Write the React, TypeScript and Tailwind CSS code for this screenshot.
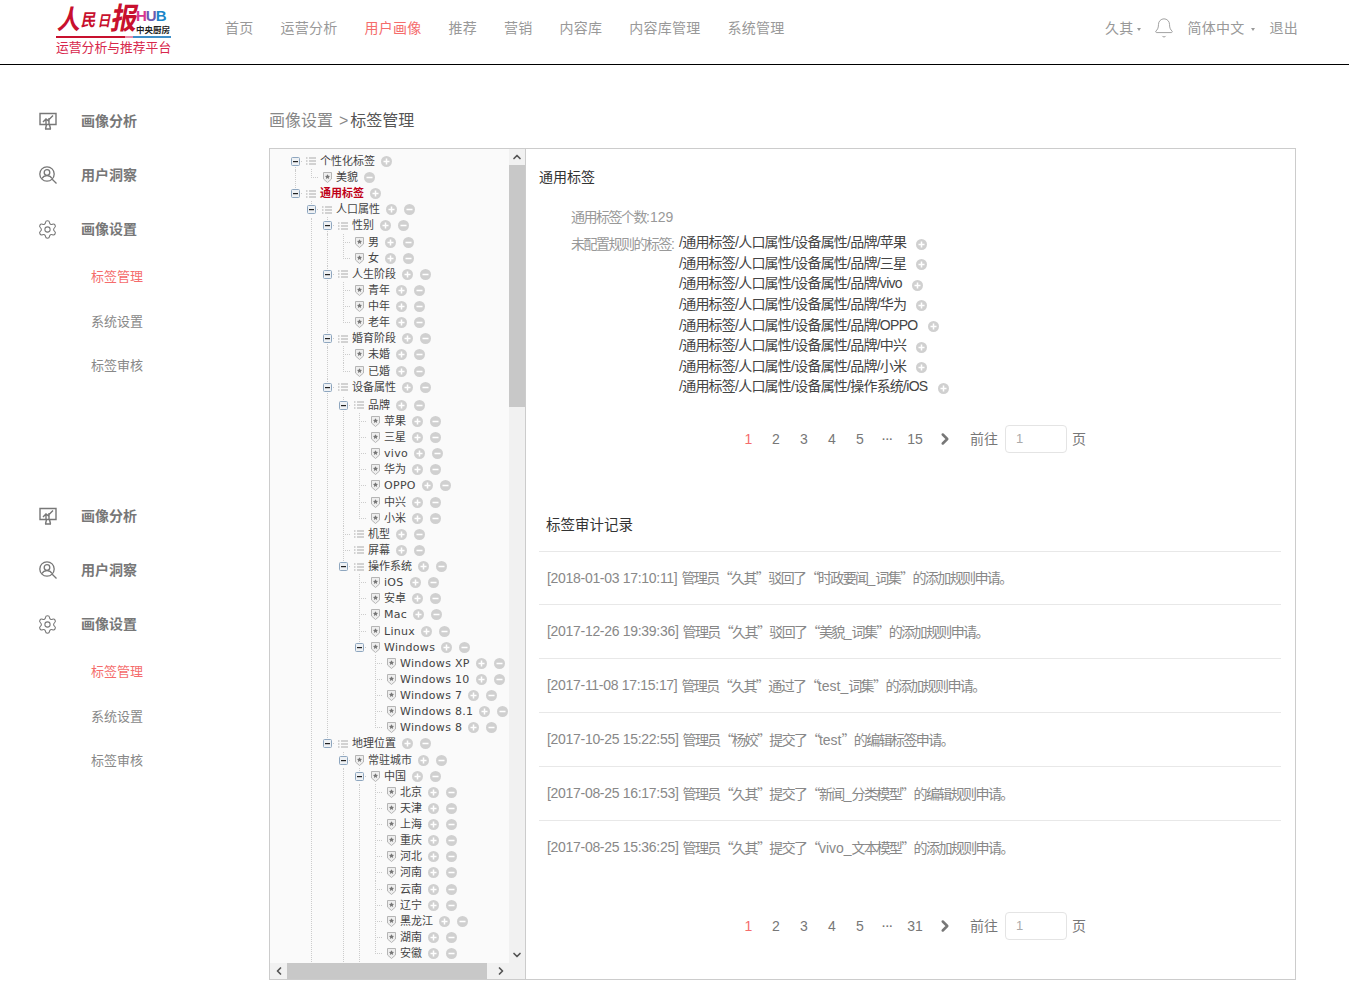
import { Bell, ChevronDown, ChevronLeft, ChevronRight, ChevronUp, Settings } from "lucide-react";

type TreeNode = {
  name: string;
  icon?: "list" | "shield";
  red?: boolean;
  noPlus?: boolean;
  noMinus?: boolean;
  line?: boolean;
  gapAfter?: boolean;
  children?: TreeNode[];
};

const leaf = (names: string[]): TreeNode[] => names.map((name) => ({ name }));

const tree: TreeNode[] = [
  {
    name: "个性化标签",
    icon: "list",
    noMinus: true,
    line: true,
    children: [{ name: "美貌", noPlus: true }],
  },
  {
    name: "通用标签",
    icon: "list",
    red: true,
    noMinus: true,
    children: [
      {
        name: "人口属性",
        icon: "list",
        line: true,
        children: [
          { name: "性别", icon: "list", line: true, children: leaf(["男", "女"]) },
          { name: "人生阶段", icon: "list", line: true, children: leaf(["青年", "中年", "老年"]) },
          { name: "婚育阶段", icon: "list", line: true, children: leaf(["未婚", "已婚"]) },
          {
            name: "设备属性",
            icon: "list",
            line: true,
            gapAfter: true,
            children: [
              {
                name: "品牌",
                icon: "list",
                line: true,
                children: leaf(["苹果", "三星", "vivo", "华为", "OPPO", "中兴", "小米"]),
              },
              { name: "机型", icon: "list" },
              { name: "屏幕", icon: "list" },
              {
                name: "操作系统",
                icon: "list",
                children: [
                  ...leaf(["iOS", "安卓", "Mac", "Linux"]),
                  {
                    name: "Windows",
                    icon: "shield",
                    children: leaf(["Windows XP", "Windows 10", "Windows 7", "Windows 8.1", "Windows 8"]),
                  },
                ],
              },
            ],
          },
          {
            name: "地理位置",
            icon: "list",
            children: [
              {
                name: "常驻城市",
                icon: "shield",
                line: true,
                children: [
                  {
                    name: "中国",
                    icon: "shield",
                    line: true,
                    children: leaf(["北京", "天津", "上海", "重庆", "河北", "河南", "云南", "辽宁", "黑龙江", "湖南", "安徽"]),
                  },
                ],
              },
            ],
          },
        ],
      },
    ],
  },
];

const navItems = ["首页", "运营分析", "用户画像", "推荐", "营销", "内容库", "内容库管理", "系统管理"];

const paths = [
  "/通用标签/人口属性/设备属性/品牌/苹果",
  "/通用标签/人口属性/设备属性/品牌/三星",
  "/通用标签/人口属性/设备属性/品牌/vivo",
  "/通用标签/人口属性/设备属性/品牌/华为",
  "/通用标签/人口属性/设备属性/品牌/OPPO",
  "/通用标签/人口属性/设备属性/品牌/中兴",
  "/通用标签/人口属性/设备属性/品牌/小米",
  "/通用标签/人口属性/设备属性/操作系统/iOS",
];

const records = [
  ["[2018-01-03 17:10:11]", "管理员“久其”驳回了“时政要闻_词集”的添加规则申请。"],
  ["[2017-12-26 19:39:36]", "管理员“久其”驳回了“美貌_词集”的添加规则申请。"],
  ["[2017-11-08 17:15:17]", "管理员“久其”通过了“test_词集”的添加规则申请。"],
  ["[2017-10-25 15:22:55]", "管理员“杨姣”提交了“test”的编辑标签申请。"],
  ["[2017-08-25 16:17:53]", "管理员“久其”提交了“新闻_分类模型”的编辑规则申请。"],
  ["[2017-08-25 15:36:25]", "管理员“久其”提交了“vivo_文本模型”的添加规则申请。"],
];

// latin runs keep normal spacing, the cjk runs are squeezed like in the original page
function Mixed({ text, cjk, latin }: { text: string; cjk: string; latin?: string }) {
  const runs = text.split(/([\x00-\x7f]+)/).filter(Boolean);
  return (
    <>
      {runs.map((r, i) =>
        /^[\x00-\x7f]/.test(r) ? (
          <span key={i} className={latin}>
            {r}
          </span>
        ) : (
          <span key={i} className={cjk}>
            {r}
          </span>
        ),
      )}
    </>
  );
}

function CircleBtn({ minus }: { minus?: boolean }) {
  return (
    <svg width="11" height="11" viewBox="0 0 11 11" className="shrink-0">
      <circle cx="5.5" cy="5.5" r="5.5" fill="#d0d0d0" />
      <rect x="2.5" y="4.75" width="6" height="1.5" fill="#fff" />
      {!minus && <rect x="4.75" y="2.5" width="1.5" height="6" fill="#fff" />}
    </svg>
  );
}

function ListIcon() {
  return (
    <svg width="10" height="8" viewBox="0 0 10 8" className="shrink-0">
      <path d="M0 1h1.5M3 1h7M0 4h1.5M3 4h7M0 7h1.5M3 7h7" stroke="#aaa" strokeWidth="1" />
    </svg>
  );
}

function ShieldIcon() {
  return (
    <svg width="9" height="11" viewBox="0 0 9 11" className="shrink-0">
      <path d="M.5.5h8v6.5L4.5 10.5.5 7z" fill="#eee" stroke="#b5b5b5" />
      <path d="M4.5 2.2l.8 1.6 1.7.2-1.2 1.2.3 1.7-1.6-.8-1.6.8.3-1.7L2 4l1.7-.2z" fill="#777" />
    </svg>
  );
}

// switch cell of a row: the dotted connector and, for a parent, the small minus box
function Switch({ open, last, first }: { open: boolean; last: boolean; first: boolean }) {
  return (
    <svg width="16" height="17" viewBox="0 0 16 17" className="shrink-0">
      {!first && <path d="M8.5 0v8" stroke="#ccc" strokeDasharray="1 1" />}
      {!last && <path d="M8.5 8v9" stroke="#ccc" strokeDasharray="1 1" />}
      <path d="M8 8.5h8" stroke="#ccc" strokeDasharray="1 1" />
      {open && (
        <g>
          <rect x="4.5" y="4.5" width="8" height="8" rx="1" fill="#eef1f4" stroke="#8ea6bf" />
          <rect x="6" y="8" width="5" height="1.2" fill="#222" />
        </g>
      )}
    </svg>
  );
}

function TreeRow({ node, first, last }: { node: TreeNode; first: boolean; last: boolean }) {
  const hasKids = !!node.children;
  return (
    <div>
      <div className={`flex h-[16.13px] items-center ${node.gapAfter ? "mb-[2px]" : ""}`}>
        <Switch open={hasKids} first={first} last={last} />
        <span className="flex w-[16px] shrink-0 justify-center">
          {node.icon === "list" ? <ListIcon /> : <ShieldIcon />}
        </span>
        <span
          className={`ml-px whitespace-nowrap text-[11px] leading-none ${
            node.red ? "font-bold text-[#c00018]" : "text-[#444]"
          }`}
        >
          <Mixed text={node.name} cjk="" latin="tracking-[0.3px]" />
        </span>
        {!node.noPlus && (
          <span className="ml-[6px]">
            <CircleBtn />
          </span>
        )}
        {!node.noMinus && (
          <span className={node.noPlus ? "ml-[6px]" : "ml-[7px]"}>
            <CircleBtn minus />
          </span>
        )}
      </div>
      {hasKids && (
        <div
          className={`ml-[8px] border-l border-dotted pl-[7px] ${
            node.line || !last ? "border-[#ccc]" : "border-transparent"
          }`}
        >
          {node.children!.map((c, i) => (
            <TreeRow key={c.name} node={c} first={false} last={i === node.children!.length - 1} />
          ))}
        </div>
      )}
    </div>
  );
}

function Pager({ total }: { total: string }) {
  return (
    <div className="flex h-7 items-center justify-center text-[14px] text-[#777]">
      <span className="w-[27px] text-center text-[#f56c6c]">1</span>
      {["2", "3", "4", "5"].map((p) => (
        <span key={p} className="w-7 text-center">
          {p}
        </span>
      ))}
      <span className="w-[27px] text-center text-[11px] font-bold">···</span>
      <span className="w-7 text-center">{total}</span>
      <span className="flex w-[32px] justify-center">
        <ChevronRight size={18} strokeWidth={3.4} color="#777" />
      </span>
      <span className="ml-[9px]">前往</span>
      <span className="ml-[7px] flex h-7 w-[62px] items-center rounded border border-[#e4e4e4] pl-[10px] text-[13px] text-[#aaa]">
        1
      </span>
      <span className="ml-[5px]">页</span>
    </div>
  );
}

function ChartIcon() {
  return (
    <svg width="18" height="18" viewBox="0 0 18 18" fill="none" stroke="#777" strokeWidth="1.4">
      <path d="M1 1.5h16v11H1z" />
      <path d="M6 17h6M7.5 12.5l-1 4.5M10.5 12.5l1 4.5" />
      <path d="M4 10l3-3 2 1.5 5-5M7 7v5M10 6v6" />
    </svg>
  );
}

function UserSearchIcon() {
  return (
    <svg width="18" height="18" viewBox="0 0 18 18" fill="none" stroke="#777" strokeWidth="1.3">
      <circle cx="8" cy="8" r="7.2" />
      <circle cx="8" cy="6.5" r="2.8" />
      <path d="M3 12.6c1-2.2 3-3 5-3s4 .8 5 3M13.2 13.2l4.3 4.3" />
    </svg>
  );
}

function SideGroup() {
  return (
    <div className="h-[395px]">
      <div className="flex h-[54px] items-center">
        <span className="flex w-[43px] pl-[1px]">
          <ChartIcon />
        </span>
        <span className="text-[14px] font-bold text-[#777]">画像分析</span>
      </div>
      <div className="flex h-[54px] items-center">
        <span className="flex w-[43px] pl-[1px]">
          <UserSearchIcon />
        </span>
        <span className="text-[14px] font-bold text-[#777]">用户洞察</span>
      </div>
      <div className="flex h-[54px] items-center">
        <span className="-ml-px flex w-[44px]">
          <Settings size={21} strokeWidth={1.2} color="#777" />
        </span>
        <span className="text-[14px] font-bold text-[#777]">画像设置</span>
      </div>
      <div className="-mt-px pl-[53px] text-[13px] leading-[44.6px] text-[#888]">
        <div className="text-[#f56c6c]">标签管理</div>
        <div>系统设置</div>
        <div>标签审核</div>
      </div>
    </div>
  );
}

export default function App() {
  return (
    <div className="h-[1000px] w-[1349px] overflow-hidden bg-white font-['Liberation_Sans','Noto_Sans_CJK_SC',sans-serif]">
      <header className="flex h-[65px] items-start border-b border-black pl-[56px] pr-[51px]">
        <div className="w-[115px] pt-[3px]">
          <div className="flex h-[31px] items-end justify-between">
            <div className="flex origin-bottom -skew-x-12 scale-y-[1.15] items-end whitespace-nowrap font-bold leading-none text-[#c8102e]">
              <span className="text-[23px]">人</span>
              <span className="mb-[5px] text-[15px]">民</span>
              <span className="mb-[5px] ml-[2px] text-[13px]">日</span>
              <span className="text-[26px]">报</span>
            </div>
            <div className="w-[35px] shrink-0 leading-none">
              <div className="text-[15px] font-bold tracking-[-1px]">
                <span className="text-[#d6358f]">H</span>
                <span className="text-[#6a5ab0]">U</span>
                <span className="text-[#1b86c8]">B</span>
              </div>
              <div className="mt-[3px] whitespace-nowrap text-[8.5px] font-bold text-[#222]">中央厨房</div>
            </div>
          </div>
          <div className="mt-[2px] flex h-[2px]">
            <div className="w-[69px] bg-[#c8102e]" />
            <div className="w-[8px] bg-[#e88aa8]" />
            <div className="flex-1 bg-[#3f8fc9]" />
          </div>
          <div className="mt-[2px] whitespace-nowrap text-[12.8px] leading-[16px] text-[#d8274c]">运营分析与推荐平台</div>
        </div>
        <nav className="ml-[54px] flex h-[56px] items-center gap-[27px] text-[14px] tracking-[0.25px] text-[#999]">
          {navItems.map((n) => (
            <span key={n} className={n === "用户画像" ? "text-[#f56c6c]" : ""}>
              {n}
            </span>
          ))}
        </nav>
        <div className="ml-auto flex h-[56px] items-center text-[14px] tracking-[0.25px] text-[#999]">
          <span>久其</span>
          <span className="ml-[3px] mt-[2px] h-0 w-0 border-x-[2.5px] border-t-[3px] border-x-transparent border-t-[#999]" />
          <span className="ml-[12px]">
            <Bell size={22} strokeWidth={1} color="#999" />
          </span>
          <span className="ml-[13px]">简体中文</span>
          <span className="ml-[6px] mt-[2px] h-0 w-0 border-x-[2.5px] border-t-[3px] border-x-transparent border-t-[#999]" />
          <span className="ml-[15px]">退出</span>
        </div>
      </header>

      <div className="flex">
        <aside className="w-[269px] shrink-0 pl-[38px] pt-[29px]">
          <SideGroup />
          <SideGroup />
        </aside>

        <main className="w-[1027px]">
          <div className="flex h-[83px] items-end pb-[16px] text-[16px] leading-[22px] text-[#888]">
            画像设置<span className="ml-[6px] mr-[2px]">&gt;</span>
            <span className="text-[#555]">标签管理</span>
          </div>

          <div className="flex h-[832px] border border-[#ccc]">
            <div className="flex w-[256px] shrink-0 flex-col border-r border-[#ccc]">
              <div className="flex min-h-0 flex-1">
                <div className="min-w-0 flex-1 overflow-hidden bg-[#fafafa] pl-[17px] pt-[4.4px] font-['DejaVu_Sans','Noto_Sans_CJK_SC',sans-serif]">
                  {tree.map((n, i) => (
                    <TreeRow key={n.name} node={n} first={i === 0} last={i === tree.length - 1} />
                  ))}
                </div>
                <div className="flex w-[16px] shrink-0 flex-col bg-[#f1f1f1]">
                  <div className="flex h-[16px] items-center justify-center">
                    <ChevronUp size={12} strokeWidth={3.4} color="#555" />
                  </div>
                  <div className="h-[242px] bg-[#c8c8c8]" />
                  <div className="mt-auto flex h-[16px] items-center justify-center">
                    <ChevronDown size={12} strokeWidth={3.4} color="#555" />
                  </div>
                </div>
              </div>
              <div className="flex h-[16px] shrink-0 items-center bg-[#f1f1f1]">
                <div className="flex w-[17px] justify-center">
                  <ChevronLeft size={12} strokeWidth={3.4} color="#555" />
                </div>
                <div className="h-full w-[200px] bg-[#c8c8c8]" />
                <div className="ml-[5px] flex w-[17px] justify-center">
                  <ChevronRight size={12} strokeWidth={3.4} color="#555" />
                </div>
              </div>
            </div>

            <div className="min-w-0 flex-1">
              <div className="pl-[13px] pt-[18px] text-[14px] leading-[20px] text-[#333]">通用标签</div>

              <div className="ml-[45px] mt-[20px] text-[14px] leading-[20px] text-[#999]">
                <Mixed text="通用标签个数:129" cjk="tracking-[-1.5px]" />
              </div>

              <div className="ml-[45px] mt-[5.4px] flex">
                <div className="w-[108px] shrink-0 pt-[2px] text-[14px] leading-[20.6px] text-[#999]">
                  <Mixed text="未配置规则的标签:" cjk="tracking-[-1.5px]" />
                </div>
                <div>
                  {paths.map((p) => (
                    <div key={p} className="flex h-[20.6px] items-center whitespace-pre text-[14px] text-[#444]">
                      <span>
                        <Mixed text={p} cjk="tracking-[-0.8px]" latin="tracking-[-0.7px]" />
                      </span>
                      <span className="ml-[10px] mt-[3px]">
                        <CircleBtn />
                      </span>
                    </div>
                  ))}
                </div>
              </div>

              <div className="mt-[28px]">
                <Pager total="15" />
              </div>

              <div className="ml-[7px] mt-[62px] pl-[13px] text-[14.5px] leading-[20px] text-[#333]">标签审计记录</div>

              <div className="ml-[13px] mt-[16px] w-[742px]">
                {records.map(([time, text], i) => (
                  <div
                    key={time}
                    className={`flex items-center border-t border-[#e8e8e8] pl-2 text-[14px] text-[#888] ${
                      i === 0 ? "h-[53px]" : "h-[54px]"
                    }`}
                  >
                    <span className="tracking-[-0.3px]">{time}</span>
                    <span className="ml-[4px] whitespace-pre">
                      <Mixed text={text} cjk="font-['Noto_Sans_CJK_SC',sans-serif] tracking-[-1.6px]" />
                    </span>
                  </div>
                ))}
              </div>

              <div className="mt-[38px]">
                <Pager total="31" />
              </div>
            </div>
          </div>
        </main>
      </div>
    </div>
  );
}
